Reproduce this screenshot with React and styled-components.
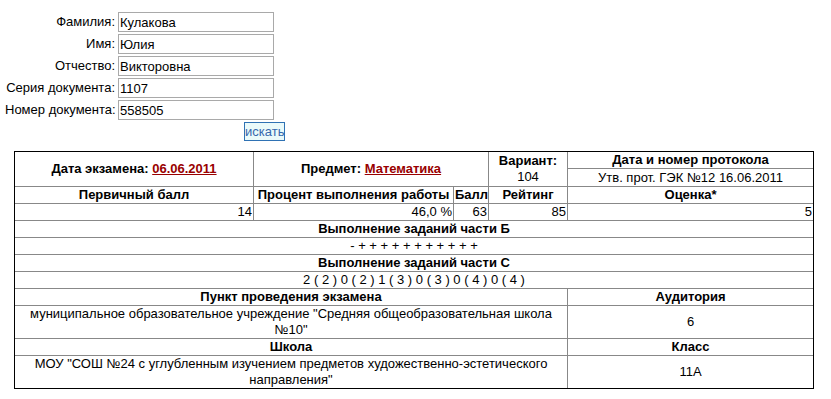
import React from "react";
import styled, { createGlobalStyle } from "styled-components";

const GlobalStyle = createGlobalStyle`
  body {
    margin: 0;
    background: #fff;
    font-family: "Liberation Sans", Arial, sans-serif;
    font-size: 13px;
    color: #000;
  }
`;

const Page = styled.div`
  padding: 12px 0 0 0;
`;

const Form = styled.div`
  display: grid;
  grid-template-columns: 110px 156px;
  column-gap: 3px;
  row-gap: 2px;
  padding-left: 5px;
  align-items: center;
`;

const Label = styled.label`
  text-align: right;
  white-space: nowrap;
  line-height: 20px;
`;

const Input = styled.input`
  box-sizing: border-box;
  width: 156px;
  height: 20px;
  margin: 0;
  padding: 0 1px;
  border: 1px solid #a9a9a9;
  font-family: "Liberation Sans", Arial, sans-serif;
  font-size: 13px;
  color: #000;
  outline: none;
`;

const ButtonRow = styled.div`
  grid-column: 2;
  padding-top: 0;
`;

const SearchButton = styled.button`
  box-sizing: border-box;
  margin-left: 126px;
  height: 19px;
  width: 41px;
  padding: 0;
  border: 1px solid #2f72b4;
  background: #eafafa;
  color: #3568ad;
  font-family: "Liberation Sans", Arial, sans-serif;
  font-size: 13px;
  line-height: 17px;
`;

const Table = styled.table`
  margin: 10px 0 0 14px;
  width: 800px;
  table-layout: fixed;
  border-collapse: separate;
  border-spacing: 0;
  border: 1px solid #000;
  font-size: 13px;
  line-height: 16px;
`;

const Cell = styled.td`
  box-sizing: border-box;
  padding: 0 1px;
  border-right: 1px solid #888;
  border-bottom: 1px solid #888;
  text-align: ${(p) => p.$align || "center"};
  font-weight: ${(p) => (p.$bold ? "bold" : "normal")};
  vertical-align: middle;

  &:last-child {
    border-right: none;
  }

  tr:last-child > & {
    border-bottom: none;
  }
`;

const Link = styled.a`
  color: #990000;
  text-decoration: underline;
`;

const fields = [
  ["Фамилия:", "Кулакова"],
  ["Имя:", "Юлия"],
  ["Отчество:", "Викторовна"],
  ["Серия документа:", "1107"],
  ["Номер документа:", "558505"],
];

export default function App() {
  return (
    <Page>
      <GlobalStyle />
      <Form>
        {fields.map(([label, value]) => (
          <React.Fragment key={label}>
            <Label>{label}</Label>
            <Input defaultValue={value} />
          </React.Fragment>
        ))}
        <ButtonRow>
          <SearchButton>искать</SearchButton>
        </ButtonRow>
      </Form>

      <Table>
        <colgroup>
          <col style={{ width: 239 }} />
          <col style={{ width: 200 }} />
          <col style={{ width: 35 }} />
          <col style={{ width: 79 }} />
          <col style={{ width: 245 }} />
        </colgroup>
        <tbody>
          <tr style={{ height: 17 }}>
            <Cell $bold rowSpan={2}>
              Дата экзамена: <Link href="#">06.06.2011</Link>
            </Cell>
            <Cell $bold rowSpan={2} colSpan={2}>
              Предмет: <Link href="#">Математика</Link>
            </Cell>
            <Cell rowSpan={2}>
              <b>Вариант:</b>
              <br />
              104
            </Cell>
            <Cell $bold>Дата и номер протокола</Cell>
          </tr>
          <tr style={{ height: 18 }}>
            <Cell>Утв. прот. ГЭК №12 16.06.2011</Cell>
          </tr>
          <tr>
            <Cell $bold>Первичный балл</Cell>
            <Cell $bold>Процент выполнения работы</Cell>
            <Cell $bold>Балл</Cell>
            <Cell $bold>Рейтинг</Cell>
            <Cell $bold>Оценка*</Cell>
          </tr>
          <tr>
            <Cell $align="right">14</Cell>
            <Cell $align="right">46,0 %</Cell>
            <Cell $align="right">63</Cell>
            <Cell $align="right">85</Cell>
            <Cell $align="right">5</Cell>
          </tr>
          <tr>
            <Cell $bold colSpan={5}>Выполнение заданий части Б</Cell>
          </tr>
          <tr>
            <Cell colSpan={5}>- + + + + + + + + + + +</Cell>
          </tr>
          <tr>
            <Cell $bold colSpan={5}>Выполнение заданий части С</Cell>
          </tr>
          <tr>
            <Cell colSpan={5}>2 ( 2 ) 0 ( 2 ) 1 ( 3 ) 0 ( 3 ) 0 ( 4 ) 0 ( 4 )</Cell>
          </tr>
          <tr>
            <Cell $bold colSpan={4}>Пункт проведения экзамена</Cell>
            <Cell $bold>Аудитория</Cell>
          </tr>
          <tr>
            <Cell colSpan={4}>
              муниципальное образовательное учреждение "Средняя общеобразовательная школа №10"
            </Cell>
            <Cell>6</Cell>
          </tr>
          <tr>
            <Cell $bold colSpan={4}>Школа</Cell>
            <Cell $bold>Класс</Cell>
          </tr>
          <tr>
            <Cell colSpan={4}>
              МОУ "СОШ №24 с углубленным изучением предметов художественно-эстетического направления"
            </Cell>
            <Cell>11А</Cell>
          </tr>
        </tbody>
      </Table>
    </Page>
  );
}
